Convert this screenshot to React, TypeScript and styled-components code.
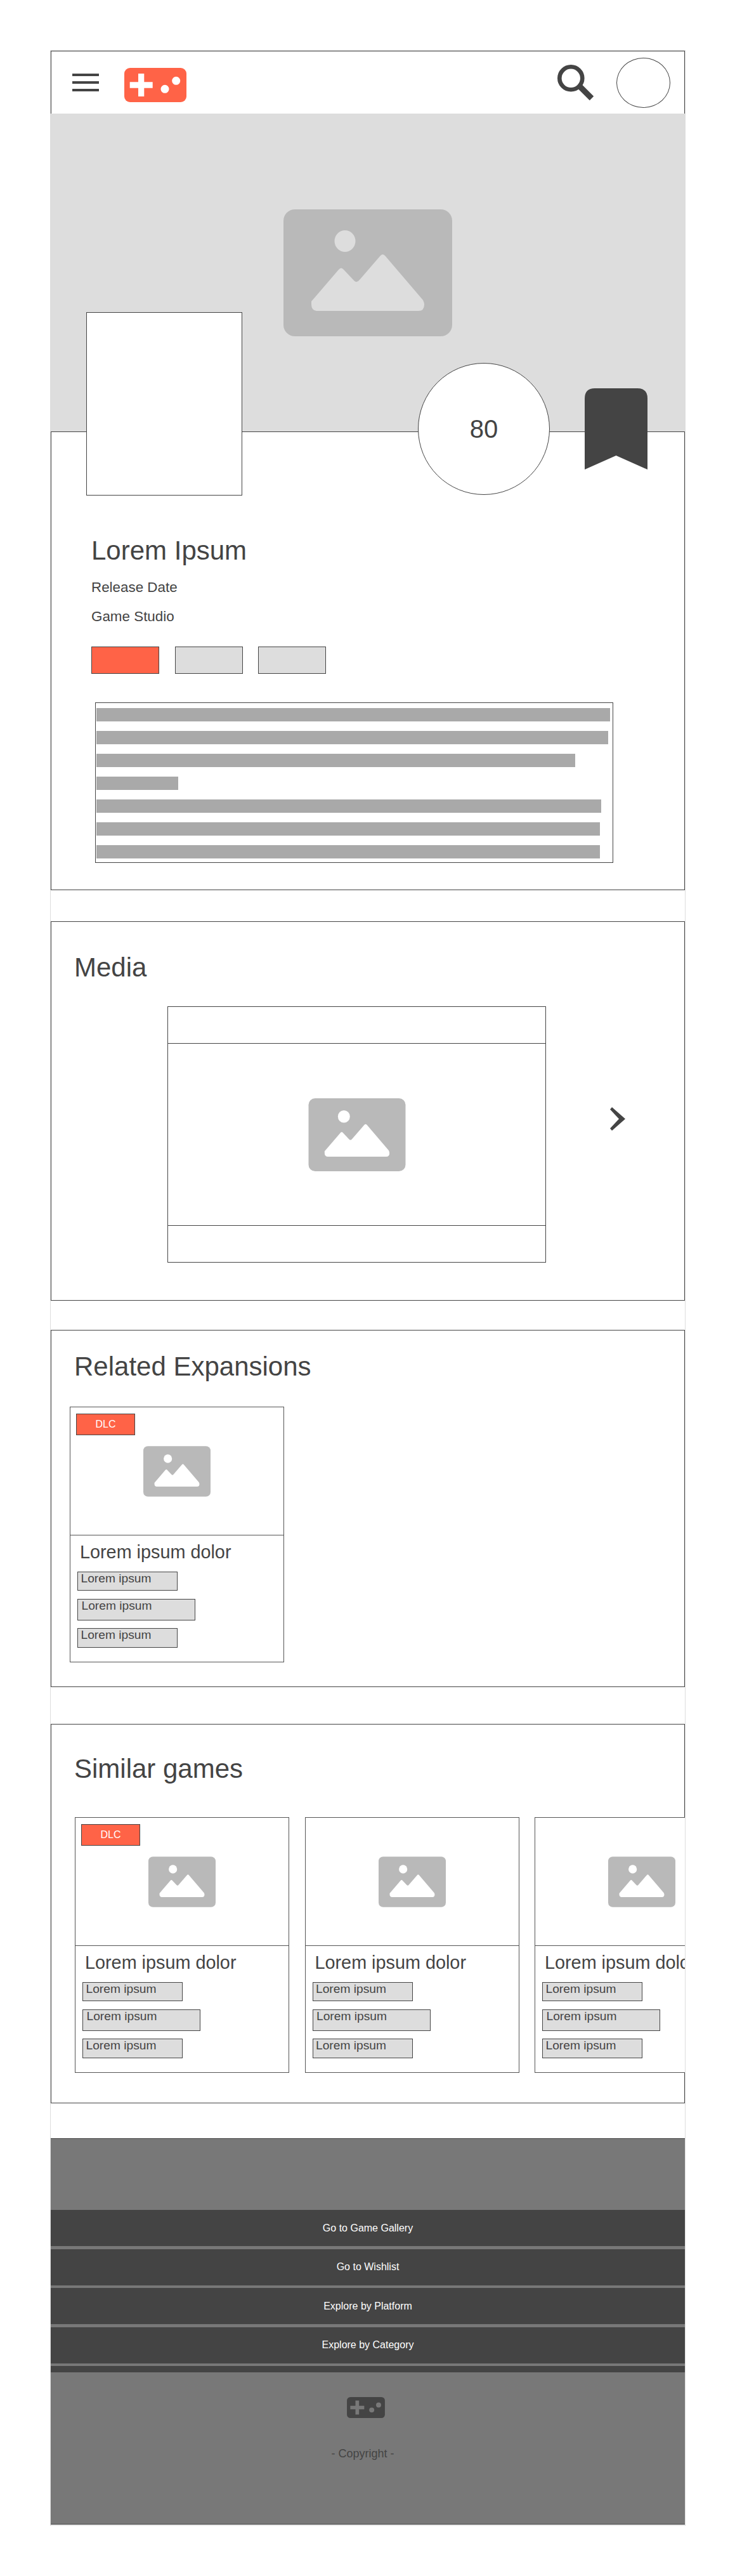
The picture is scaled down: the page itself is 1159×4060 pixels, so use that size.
import React from 'react'
import styled, { createGlobalStyle } from 'styled-components'

const GlobalStyle = createGlobalStyle`
    * {
        box-sizing: border-box;
    }
    body {
        margin: 0;
        background: #fff;
        font-family: "Liberation Sans", Arial, sans-serif;
        color: #444;
    }
`

const ImageIcon: React.FC<{ width: number; height: number; mountain?: string }> = ({ width, height, mountain = '#fff' }) => (
    <svg width={width} height={height} viewBox="0 0 266 200">
        <rect width="266" height="200" rx="18" fill="#b9b9b9" />
        <ellipse cx="97" cy="50" rx="16.5" ry="17" fill={mountain} />
        <path
            d="M44 145 L87 95 Q91 90 95 95 L111 112 Q115.5 117 120 111 L152 74 Q156.5 68 161 74 L220 143 Q222 147 222 150 Q222 160 213 160 L52 160 Q44 159 44 150 Q44 147 44 145 Z"
            fill={mountain}
        />
    </svg>
)

const GamepadIcon: React.FC<{ width: number; height: number; body: string; marks: string }> = ({ width, height, body, marks }) => (
    <svg width={width} height={height} viewBox="0 0 98 54">
        <rect width="98" height="54" rx="9" fill={body} />
        <path d="M22 9 H31.3 V22.3 H44.7 V31.7 H31.3 V45 H22 V31.7 H8.7 V22.3 H22 Z" fill={marks} />
        <circle cx="64" cy="33.3" r="6.5" fill={marks} />
        <circle cx="81.7" cy="20.3" r="6.5" fill={marks} />
    </svg>
)

const similarGames = [{ dlc: true }, { dlc: false }, { dlc: false }]
const summaryLines = [810, 807, 755, 129, 796, 794, 794]
const footerLinks = ['Go to Game Gallery', 'Go to Wishlist', 'Explore by Platform', 'Explore by Category']

const GameCard: React.FC<{ dlc: boolean }> = ({ dlc }) => (
    <Card>
        <CardImage>
            {dlc && <DlcBadge>DLC</DlcBadge>}
            <ImageIcon width={106} height={80} />
        </CardImage>
        <CardTitle>Lorem ipsum dolor</CardTitle>
        <Tag $w={158} $h={30} $pad={4.5}>Lorem ipsum</Tag>
        <Tag $w={186} $h={34} $pad={5.5}>Lorem ipsum</Tag>
        <Tag $w={158} $h={31} $pad={4.5}>Lorem ipsum</Tag>
    </Card>
)

const App: React.FC = () => {
    return (
        <Page>
            <GlobalStyle />
            <Header>
                <Burger>
                    <span />
                    <span />
                    <span />
                </Burger>
                <Logo>
                    <GamepadIcon width={98} height={54} body="#ff6347" marks="#fff" />
                </Logo>
                <SearchButton>
                    <svg width="58" height="57" viewBox="0 0 58 57">
                        <circle cx="21.3" cy="21.3" r="18" fill="none" stroke="#444" strokeWidth="6.6" />
                        <path d="M36 35 L54 53" stroke="#444" strokeWidth="9" fill="none" />
                    </svg>
                </SearchButton>
                <Avatar />
            </Header>

            <Hero>
                <ImageIcon width={266} height={200} mountain="#ddd" />
                <Poster />
                <Score>80</Score>
                <Bookmark>
                    <svg width="99" height="128" viewBox="0 0 99 128">
                        <path d="M0 128 V16 Q0 0 16 0 H83 Q99 0 99 16 V128 L49.5 106 Z" fill="#444" />
                    </svg>
                </Bookmark>
            </Hero>

            <InfoPanel>
                <GameTitle>Lorem Ipsum</GameTitle>
                <Meta>Release Date</Meta>
                <Meta>Game Studio</Meta>
                <Actions>
                    <ActionButton $active />
                    <ActionButton />
                    <ActionButton />
                </Actions>
                <Summary>
                    {summaryLines.map((w, i) => <SummaryLine key={i} $w={w} />)}
                </Summary>
            </InfoPanel>

            <MediaSection>
                <SectionTitle>Media</SectionTitle>
                <MediaRow>
                    <Slider>
                        <SliderBar />
                        <SliderStage>
                            <ImageIcon width={154} height={115} />
                        </SliderStage>
                        <SliderBar />
                    </Slider>
                    <NextArrow>
                        <svg width="24" height="37" viewBox="0 0 24 37">
                            <polygon points="3,0 24,18.5 3,37 0,33.5 14,18.5 0,3.5" fill="#444" />
                        </svg>
                    </NextArrow>
                </MediaRow>
            </MediaSection>

            <RelatedSection>
                <SectionTitle $inset={7}>Related Expansions</SectionTitle>
                <GameCard dlc />
            </RelatedSection>

            <SimilarSection>
                <SectionTitle>Similar games</SectionTitle>
                <CardStrip>
                    {similarGames.map((game, i) => <GameCard key={i} dlc={game.dlc} />)}
                </CardStrip>
            </SimilarSection>

            <Footer>
                {footerLinks.map((label) => <FooterLink key={label}>{label}</FooterLink>)}
                <FooterStripe />
                <FooterLogo>
                    <GamepadIcon width={60} height={33} body="#444" marks="#787878" />
                </FooterLogo>
                <Copyright>- Copyright -</Copyright>
            </Footer>
        </Page>
    )
}

export default App

const Page = styled.div`
    width: 1002px;
    height: 3902px;
    margin: 79px 0 0 79px;
    border: 1px solid #ddd;
`
const Header = styled.header`
    height: 99px;
    display: flex;
    align-items: center;
    padding: 0 22px 0 33px;
    border: solid #444;
    border-width: 1px 1px 0;
`
const Burger = styled.div`
    width: 42px;
    display: flex;
    flex-direction: column;
    gap: 8px;
    span {
        height: 4px;
        background: #444;
    }
`
const Logo = styled.div`
    display: flex;
    margin: 7px 0 0 40px;
`
const SearchButton = styled.div`
    display: flex;
    margin-left: auto;
`
const Avatar = styled.div`
    width: 85px;
    height: 79px;
    margin-left: 35px;
    border: 1px solid #444;
    border-radius: 50%;
`
const Hero = styled.div`
    position: relative;
    height: 501px;
    display: flex;
    align-items: center;
    justify-content: center;
    background: #ddd;
`
const Poster = styled.div`
    position: absolute;
    z-index: 1;
    left: 56px;
    top: 313px;
    width: 246px;
    height: 289px;
    background: #fff;
    border: 1px solid #444;
`
const Score = styled.div`
    position: absolute;
    z-index: 1;
    left: 579px;
    top: 393px;
    width: 208px;
    height: 208px;
    display: flex;
    align-items: center;
    justify-content: center;
    background: #fff;
    border: 1px solid #444;
    border-radius: 50%;
    font-size: 40px;
`
const Bookmark = styled.div`
    position: absolute;
    z-index: 1;
    left: 842px;
    top: 433px;
    display: flex;
`
const InfoPanel = styled.section`
    height: 723px;
    padding: 163px 0 0 63px;
    border: 1px solid #444;
`
const GameTitle = styled.h1`
    margin: 0 0 21px;
    font-size: 42px;
    font-weight: 400;
    line-height: 48px;
`
const Meta = styled.p`
    margin: 0 0 20px;
    font-size: 22.4px;
    line-height: 26px;
`
const Actions = styled.div`
    display: flex;
    gap: 24.5px;
    margin-top: 34px;
`
const ActionButton = styled.div<{ $active?: boolean }>`
    width: 107px;
    height: 43px;
    background: ${(p) => (p.$active ? '#ff6347' : '#ddd')};
    border: 1px solid #444;
`
const Summary = styled.div`
    width: 817px;
    height: 253px;
    margin: 45px 0 0 6px;
    padding: 8px 0 0 1px;
    display: flex;
    flex-direction: column;
    gap: 15px;
    border: 1px solid #444;
`
const SummaryLine = styled.div<{ $w: number }>`
    width: ${(p) => p.$w}px;
    height: 21px;
    background: #a9a9a9;
`
const SectionTitle = styled.h2<{ $inset?: number }>`
    margin: 0 0 0 ${(p) => p.$inset ?? 0}px;
    font-size: 42px;
    font-weight: 400;
    line-height: 48px;
`
const MediaSection = styled.section`
    height: 598px;
    margin-top: 49px;
    padding: 48px 0 0 36px;
    border: 1px solid #444;
`
const MediaRow = styled.div`
    display: flex;
    margin: 37px 0 0 147px;
`
const Slider = styled.div`
    width: 597px;
    height: 404px;
    display: grid;
    grid-template-rows: 57px 1fr 57px;
    border: 1px solid #444;
`
const SliderBar = styled.div``
const SliderStage = styled.div`
    display: flex;
    align-items: center;
    justify-content: center;
    border: solid #444;
    border-width: 1px 0;
`
const NextArrow = styled.div`
    display: flex;
    margin: 159px 0 0 101px;
`
const RelatedSection = styled.section`
    height: 563px;
    margin-top: 46px;
    padding: 33px 0 0 29px;
    border: 1px solid #444;
    ${SectionTitle} {
        margin-bottom: 39px;
    }
`
const SimilarSection = styled.section`
    height: 598px;
    margin-top: 58px;
    padding: 46px 0 0 36px;
    border: 1px solid #444;
    ${SectionTitle} {
        margin-bottom: 52px;
    }
`
const CardStrip = styled.div`
    position: relative;
    margin: 0 -1px 0 1px;
    display: flex;
    gap: 24.5px;
    overflow: hidden;
    background: #fff;
`
const Card = styled.article`
    flex: none;
    width: 338px;
    height: 403px;
    background: #fff;
    border: 1px solid #555;
`
const CardImage = styled.div`
    position: relative;
    height: 202px;
    display: flex;
    align-items: center;
    justify-content: center;
    border-bottom: 1px solid #555;
`
const DlcBadge = styled.div`
    position: absolute;
    left: 9px;
    top: 10px;
    width: 93px;
    height: 34px;
    display: flex;
    align-items: center;
    justify-content: center;
    background: #ff6347;
    border: 1px solid #444;
    color: #fff;
    font-size: 16px;
`
const CardTitle = styled.h3`
    margin: 10px 0 15px 15px;
    font-size: 28.8px;
    font-weight: 400;
    line-height: 32px;
`
const Tag = styled.div<{ $w: number; $h: number; $pad: number }>`
    width: ${(p) => p.$w}px;
    height: ${(p) => p.$h}px;
    margin: 0 0 12.5px 11px;
    padding-left: ${(p) => p.$pad}px;
    background: #ddd;
    border: 1px solid #444;
    font-size: 19.2px;
    line-height: 20px;
`
const Footer = styled.footer`
    height: 609px;
    margin-top: 55px;
    padding-top: 112px;
    background: #787878;
    border: solid #444;
    border-width: 1px 0;
`
const FooterLink = styled.div`
    height: 57px;
    margin-bottom: 4.5px;
    display: flex;
    align-items: center;
    justify-content: center;
    background: #444;
    color: #fff;
    font-size: 16px;
`
const FooterStripe = styled.div`
    height: 10px;
    background: #444;
`
const FooterLogo = styled.div`
    display: flex;
    justify-content: center;
    margin-top: 39px;
    padding-right: 6px;
`
const Copyright = styled.p`
    margin: 46px 0 0;
    padding-right: 16px;
    text-align: center;
    font-size: 18px;
    line-height: 20px;
`
